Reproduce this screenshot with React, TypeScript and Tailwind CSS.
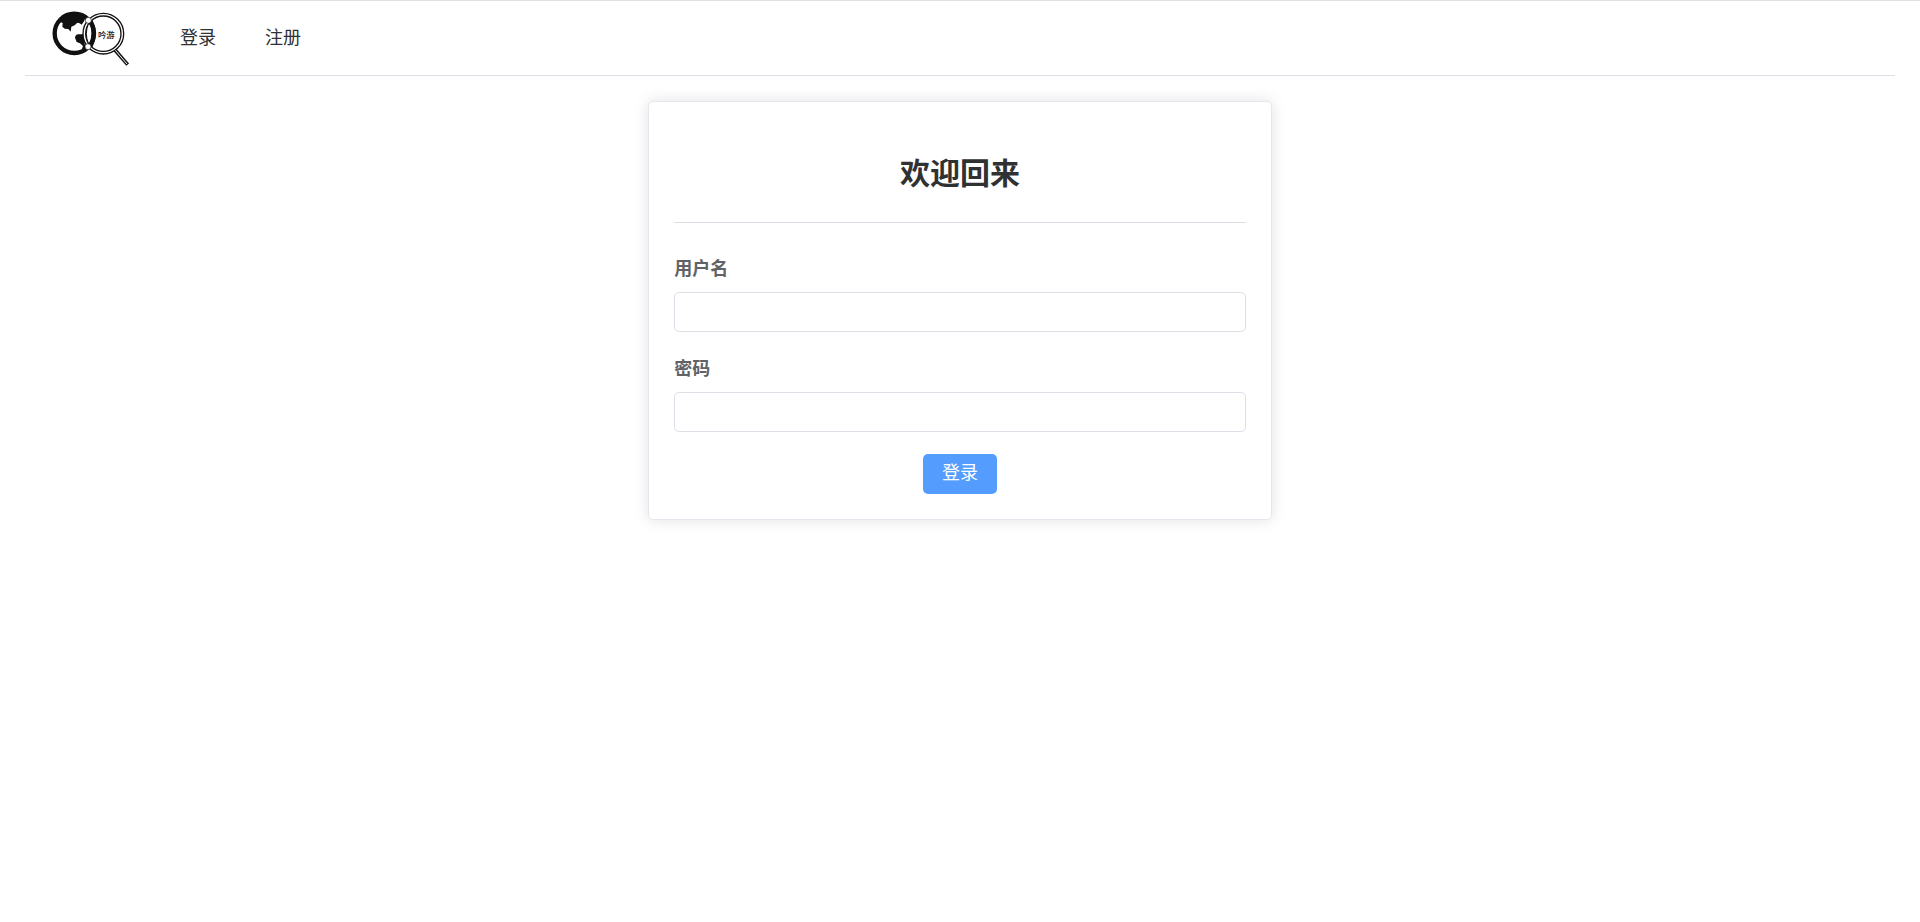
import { useId, useState } from "react";

const NAV_LINKS = [
  { label: "登录", href: "#login" },
  { label: "注册", href: "#register" },
];

function Logo() {
  return (
    <svg
      viewBox="0 0 288 198"
      className="h-[66px] w-24"
      role="img"
      aria-label="吟游"
    >
      {/* globe */}
      <circle cx="91" cy="88" r="59" fill="#fff" stroke="#111" strokeWidth="13" />
      <path
        d="M47 53 L56 57 L55 68 L62 74 L73 75 L80 83 L82 68 L92 64 L100 56 L107 58 L113 62 L120 52 L126 36 Q92 16 58 38 Z"
        fill="#111"
      />
      <path
        d="M93 101 Q94 92 103 91 L118 91 L122 118 L126 142 L112 146 Q113 135 117 126 L108 118 L98 114 Z"
        fill="#111"
      />
      {/* lens */}
      <circle cx="178" cy="89" r="57" fill="none" stroke="#111" strokeWidth="12" />
      <circle cx="178" cy="89" r="57" fill="none" stroke="#fff" strokeWidth="4" />
      <path d="M134 58 Q121 89 134 120 Q144 89 134 58 Z" fill="#fff" />
      <path d="M134 58 Q120 89 134 120" fill="none" stroke="#111" strokeWidth="3" />
      <path d="M140 52 Q158 88 140 126" fill="none" stroke="#111" strokeWidth="13" />
      <circle cx="133" cy="49" r="9" fill="#fff" stroke="#111" strokeWidth="2" />
      <circle cx="132" cy="128" r="9" fill="#fff" stroke="#111" strokeWidth="2" />
      {/* handle */}
      <path d="M213 138 L251 182" stroke="#111" strokeWidth="11" />
      <path d="M214 139 L249 180" stroke="#fff" strokeWidth="3" />
      <text
        x="187"
        y="101"
        textAnchor="middle"
        fontSize="25"
        fontWeight="500"
        fill="#111"
      >
        吟游
      </text>
    </svg>
  );
}

function Header() {
  return (
    <header className="flex h-[75px] items-start border-b border-[#dcdfe6] pl-[19px]">
      <a href="#home" className="mt-[3px]">
        <Logo />
      </a>
      <nav className="ml-4 flex h-[74px] items-center gap-px">
        {NAV_LINKS.map((link) => (
          <a
            key={link.href}
            href={link.href}
            className="px-6 text-lg text-[#303133] hover:text-[#409eff]"
          >
            {link.label}
          </a>
        ))}
      </nav>
    </header>
  );
}

interface FieldProps {
  label: string;
  type: string;
  value: string;
  onChange: (value: string) => void;
}

function Field({ label, type, value, onChange }: FieldProps) {
  const id = useId();
  return (
    <div className="mb-[22px]">
      <label
        htmlFor={id}
        className="mb-2 block text-lg leading-[30px] font-bold text-[#606266]"
      >
        {label}
      </label>
      <input
        id={id}
        type={type}
        value={value}
        onChange={(e) => onChange(e.target.value)}
        className="block h-10 w-full rounded-[5px] border border-[#dcdfe6] px-4 text-base text-[#606266] outline-none focus:border-[#409eff]"
      />
    </div>
  );
}

function LoginCard() {
  const [username, setUsername] = useState("");
  const [password, setPassword] = useState("");

  return (
    <section className="mx-auto mt-[25px] w-1/3 rounded-[5px] border border-[#e4e7ed] bg-white p-[25px] shadow-[0_0_15px_rgba(0,0,0,0.12)]">
      <h1 className="border-b border-[#dcdfe6] pt-[25px] pb-[26px] text-center text-3xl leading-[44px] font-bold text-[#303133]">
        欢迎回来
      </h1>
      <form className="pt-[31px]" onSubmit={(e) => e.preventDefault()}>
        <Field label="用户名" type="text" value={username} onChange={setUsername} />
        <Field label="密码" type="password" value={password} onChange={setPassword} />
        <div className="flex justify-center">
          <button
            type="submit"
            className="h-10 rounded-[5px] bg-[#549dff] px-[19px] pb-0.5 text-lg text-white hover:bg-[#79bbff]"
          >
            登录
          </button>
        </div>
      </form>
    </section>
  );
}

export default function App() {
  return (
    <div className="min-h-screen border-t border-[#e0e0e0] px-[25px] pb-[25px] font-['Liberation_Sans','Noto_Sans_CJK_SC',sans-serif]">
      <Header />
      <main>
        <LoginCard />
      </main>
    </div>
  );
}
